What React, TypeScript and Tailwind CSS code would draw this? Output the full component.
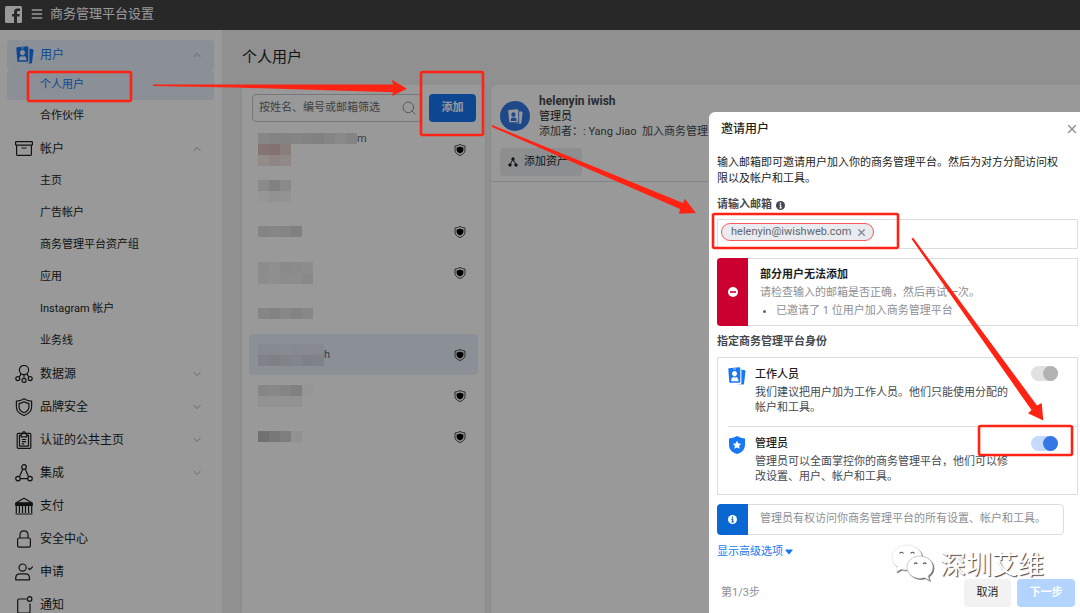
import React from 'react';
import { ChevronDown, ChevronUp, Menu, Search, X } from 'lucide-react';
import clsx from 'clsx';

const icons: Record<string, React.ReactNode> = {
  account: (
    <>
      <rect x="0.6" y="1.6" width="16.8" height="3.6" rx="0.6" />
      <path d="M1.6 5.2v9.4q0 .8.8.8h13.2q.8 0 .8-.8V5.2M6.5 8h5" />
    </>
  ),
  data: (
    <>
      <circle cx="9" cy="5" r="4.6" />
      <path d="M5.6 8.4v1.8L4 11.8M12.4 8.4v1.8l1.6 1.6M9 9.6v3.2" />
      <circle cx="2.8" cy="13.6" r="2" />
      <circle cx="15.2" cy="13.6" r="2" />
      <circle cx="9" cy="15.4" r="2" />
    </>
  ),
  brand: (
    <>
      <path d="M9 .7q3.4 2.2 7.6 2.4V9q0 6-7.6 8.5Q1.4 15 1.4 9V3.1Q5.6 2.900 9 .7z" />
      <path d="M9 3.7q2.3 1.5 4.9 1.7V9q0 3.9-4.9 5.7Q4.1 12.9 4.1 9V5.4Q6.7 5.2 9 3.7z" />
    </>
  ),
  page: (
    <>
      <rect x="2.2" y="2.4" width="13.6" height="15" rx="1" />
      <path d="M6.2 4.4H4.5v10.7h9V4.4h-1.7M6.2 5.8V2.8h1.3Q7.6.7 9 .7t1.5 2.1h1.3v3zM6.8 8.5h4.4M6.8 10.7h4.4M6.8 12.9h2.4" />
    </>
  ),
  integration: (
    <>
      <circle cx="9" cy="3" r="2.3" />
      <circle cx="3" cy="14.6" r="2.3" />
      <circle cx="15" cy="14.6" r="2.3" />
      <path d="M7.8 5L4.4 12.7M10.2 5l3.4 7.7M5.3 14.6h7.4" />
    </>
  ),
  payment: (
    <>
      <path d="M.7 8.4V6L9 1.2 17.3 6v2.4z" />
      <path d="M1.6 5.8h14.8v2.4H1.6z" fill="currentColor" />
      <path d="M1.3 8.4v7.5M4.4 8.4v7.5M7.5 8.4v7.5M10.5 8.4v7.5M13.6 8.4v7.5M16.7 8.4v7.5M.5 17h17" />
    </>
  ),
  security: (
    <>
      <rect x="2.6" y="8" width="12.8" height="9.2" rx="1.6" />
      <path d="M5 8V5q0-4.2 4-4.2T13 5v3" />
    </>
  ),
  request: (
    <>
      <circle cx="7.6" cy="4.6" r="3.6" />
      <path d="M.7 16.8v-1.600q0-4.400 4.200-4.400h5.400q4.200 0 4.200 4.400v1.600zM13.200 5l1.700 1.700L17.700 3.600" />
    </>
  ),
  notice: (
    <>
      <path d="M11.500 3H4.200Q2.700 3 2.700 4.500v11q0 1.500 1.500 1.500h9.300q1.500 0 1.500-1.500V7.500" />
      <circle cx="14.600" cy="3" r="2.300" />
    </>
  ),
};

function LineIcon({ name }: { name: string }) {
  return (
    <svg className="size-[18px] shrink-0" viewBox="0 0 18 18" fill="none" stroke="currentColor" strokeWidth="1.2" strokeLinejoin="round">
      {icons[name]}
    </svg>
  );
}

function BadgeIcon({ className }: { className?: string }) {
  return (
    <svg className={clsx('shrink-0', className)} viewBox="0 0 18 18" fill="currentColor">
      <path d="M13.400 2.600l3.400.6q.8.200.7 1l-1.500 12.600q-.1.900-1 .8L8.600 16.900h4.100q.7 0 .7-.8z" />
      <path
        fillRule="evenodd"
        d="M1 1.200L11.300.3q1 0 1 1v13.500q0 .9-.9 1H2.300q-.9 0-1-.9L.3 2.200q0-.9.700-1zM6.500 4a2.500 2.700 0 1 0 .01 0zM3.100 14.300h7.400q0-3.500-2.300-4.400-1.700 1.200-3 0-2.200.9-2.100 4.400z"
      />
      <path d="M5.300 1.600h2.500v.8H5.300z" fill="white" />
    </svg>
  );
}

function ShieldIcon() {
  return (
    <svg className="size-3 shrink-0" viewBox="0 0 12 12" role="img" aria-label="管理员">
      <path d="M6 .5q2.400 1.300 5 1.500V6q0 3.800-5 5.500Q1 9.800 1 6V2Q3.600 1.800 6 .5z" fill="none" stroke="#333" strokeWidth=".9" />
      <path d="M6 2.600q1.600.8 3.400 1V6q0 2.400-3.400 3.500Q2.600 8.400 2.600 6V3.600q1.800-.2 3.400-1z" fill="#000" />
    </svg>
  );
}

const accountLinks = ['主页', '广告帐户', '商务管理平台资产组', '应用', 'Instagram 帐户', '业务线'];

const sections = [
  { icon: 'data', label: '数据源', expandable: true },
  { icon: 'brand', label: '品牌安全', expandable: true },
  { icon: 'page', label: '认证的公共主页', expandable: true },
  { icon: 'integration', label: '集成', expandable: true },
  { icon: 'payment', label: '支付', expandable: false },
  { icon: 'security', label: '安全中心', expandable: false },
  { icon: 'request', label: '申请', expandable: false },
  { icon: 'notice', label: '通知', expandable: false },
];

function Sidebar() {
  return (
    <nav className="w-[222px] shrink-0 bg-white pt-[10px] pr-2 pl-[7px] text-[#1c1e21]">
      <button className="flex h-[30px] w-full items-center gap-[6px] rounded bg-[#e8effb] pr-[11px] pl-[9px] text-xs text-[#1877f2]">
        <BadgeIcon className="size-[18px]" />
        用户
        <ChevronUp className="ml-auto size-3 text-[#a8adb5]" />
      </button>
      <a href="#people" className="flex h-[30px] items-center rounded bg-[#e8effb] pl-[33px] text-[11px] text-[#1877f2]">
        个人用户
      </a>
      <a href="#partners" className="flex h-[33px] items-center pl-[33px] text-[11px]">
        合作伙伴
      </a>
      <button className="flex h-8 w-full items-center gap-[6px] pr-[11px] pl-2 text-xs">
        <LineIcon name="account" />
        <span className="pl-px">帐户</span>
        <ChevronUp className="ml-auto size-3 text-[#a8adb5]" />
      </button>
      {accountLinks.map((label) => (
        <a key={label} href="#accounts" className="flex h-8 items-center pl-[33px] text-[11px]">
          {label}
        </a>
      ))}
      {sections.map((section) => (
        <button key={section.icon} className="flex h-[33px] w-full items-center gap-[6px] pr-[11px] pl-2 text-xs">
          <LineIcon name={section.icon} />
          <span className="pl-px">{section.label}</span>
          {section.expandable && <ChevronDown className="ml-auto size-3 text-[#a8adb5]" />}
        </button>
      ))}
    </nav>
  );
}

interface Person {
  id: number;
  // masked name, one array of block colours per line
  mask: string[][];
  tail?: string;
  admin?: boolean;
  selected?: boolean;
}

const people: Person[] = [
  {
    id: 1,
    mask: [
      ['bg-[#e2e2e2]', 'bg-[#dcdcdc]', 'bg-[#dadada]', 'bg-[#dedede]', 'bg-[#dadada]', 'bg-[#d8d8d8]', 'bg-[#dedede]', 'bg-[#e4e4e4]', 'bg-[#dcdcdc]'],
      ['bg-[#ddc2c1]', 'bg-[#dabfbe]', 'bg-[#e6d2d1]'],
      ['bg-[#f2e8e7]', 'bg-[#eddedd]', 'bg-[#f0e4e3]'],
    ],
    tail: 'm',
    admin: true,
  },
  { id: 2, mask: [['bg-[#e6e6e6]', 'bg-[#d8d8d8]', 'bg-[#e6e6e6]'], ['bg-[#fafafa]', 'bg-[#f3f3f3]', 'bg-[#f6f6f6]']] },
  { id: 3, mask: [['bg-[#dcdcdc]', 'bg-[#e0e0e0]', 'bg-[#dedede]', 'bg-[#d6d6d6]']], admin: true },
  {
    id: 4,
    mask: [
      ['bg-[#e9e9e9]', 'bg-[#eeeeee]', 'bg-[#e6e6e6]', 'bg-[#e8e8e8]', 'bg-[#ebebeb]'],
      ['bg-[#ececec]', 'bg-[#efefef]', 'bg-[#ebebeb]', 'bg-[#ebebeb]', 'bg-[#e4e4e4]'],
    ],
    admin: true,
  },
  { id: 5, mask: [['bg-[#e0e0e0]', 'bg-[#dadada]', 'bg-[#e2e2e2]', 'bg-[#dadada]', 'bg-[#e2e2e2]']] },
  {
    id: 6,
    mask: [
      ['bg-[#dfe5f2]', 'bg-[#e0e5f0]', 'bg-[#e2e8f4]', 'bg-[#dfe4ef]', 'bg-[#e2e7f2]', 'bg-[#dfe5ef]'],
      ['bg-[#d5d9e5]', 'bg-[#d2d5e0]', 'bg-[#d7dbe6]', 'bg-[#d9dfea]', 'bg-[#d0d6e2]', 'bg-[#d4d9e4]'],
    ],
    tail: 'h',
    admin: true,
    selected: true,
  },
  {
    id: 7,
    mask: [
      ['bg-[#e0e0e0]', 'bg-[#e3e3e3]', 'bg-[#dedede]', 'bg-[#d6d6d6]', 'bg-[#fafafa]'],
      ['bg-[#f3f3f3]', 'bg-[#f6f6f6]', 'bg-[#f3f3f3]', 'bg-[#f3f3f3]'],
    ],
    admin: true,
  },
  { id: 8, mask: [['bg-[#bcbcbc]', 'bg-[#c8c8c8]', 'bg-[#d3d3d3]', 'bg-[#f4f4f4]']], admin: true },
];

function PeopleList() {
  return (
    <section className="w-[243px] shrink-0 rounded-t-md bg-white px-[7px] pt-[9px] shadow">
      <div className="flex gap-[7px] pr-[2px] pl-[3px]">
        <label className="flex h-7 min-w-0 flex-1 items-center rounded border border-[#c4c8ce] pr-1 pl-[6px]">
          <input
            type="text"
            aria-label="筛选用户"
            placeholder="按姓名、编号或邮箱筛选"
            className="min-w-0 flex-1 text-[11px] placeholder:text-[#6a6d73] focus:outline-none"
          />
          <Search className="size-4" color="#8d949e" strokeWidth={1.5} />
        </label>
        <button className="h-7 w-[47px] rounded bg-[#1877f2] text-[11px] font-bold text-white">添加</button>
      </div>
      <ul className="pt-[7px]">
        {people.map((person) => (
          <li
            key={person.id}
            className={clsx('flex h-[41px] items-center justify-between rounded pr-3 pl-[9px]', person.selected && 'bg-[#e8effb]')}
          >
            <div className="flex items-center">
              <div>
                {person.mask.map((line, i) => (
                  <div key={i} className="flex">
                    {line.map((color, j) => (
                      <span key={j} className={clsx('size-[11px]', color)} />
                    ))}
                  </div>
                ))}
              </div>
              {person.tail && (
                <span className={clsx('text-[11px] leading-3 text-[#606770]', person.id === 1 && 'self-start')}>{person.tail}</span>
              )}
            </div>
            {person.admin && <ShieldIcon />}
          </li>
        ))}
      </ul>
    </section>
  );
}

function PersonDetail() {
  return (
    <section className="min-w-0 flex-1 rounded-tl-md bg-white shadow">
      <div className="h-[97px] border-b border-[#dadde1] px-[9px] pt-2">
        <div className="flex gap-[9px]">
          <div className="mt-2 flex size-[30px] shrink-0 items-center justify-center rounded-full bg-[#3578e5] text-white">
            <BadgeIcon className="size-[15px]" />
          </div>
          <div className="pt-px text-[11px] leading-[15px] whitespace-nowrap text-[#1c1e21]">
            <h2 className="text-xs leading-[15px] font-bold text-[#444950]">helenyin iwish</h2>
            <p>管理员</p>
            <p className="leading-4 text-[#444950]">添加者：: Yang Jiao&nbsp; 加入商务管理</p>
          </div>
        </div>
        <button className="mt-2 flex h-7 w-[82px] items-center gap-[6px] rounded bg-[#ebedf0] px-2 text-[11px] text-[#1c1e21]">
          <svg className="size-[10px]" viewBox="0 0 10 10" fill="currentColor" stroke="currentColor">
            <path d="M5 2L2 8M5 2l3 6" fill="none" strokeWidth="1" />
            <circle cx="5" cy="2" r="1.200" />
            <circle cx="2" cy="8" r="1.200" />
            <circle cx="8" cy="8" r="1.200" />
          </svg>
          添加资产
        </button>
      </div>
    </section>
  );
}

function InfoIcon({ className }: { className?: string }) {
  return (
    <svg className={clsx('size-[9px]', className)} viewBox="0 0 10 10">
      <circle cx="5" cy="5" r="5" fill="currentColor" />
      <path d="M5 1.700v1.500M3.900 4.500h1.300v3M3.900 7.700h2.500" stroke={className?.includes('text-white') ? '#0a66d0' : 'white'} strokeWidth="1.300" />
    </svg>
  );
}

function InviteDialog() {
  return (
    <div role="dialog" aria-labelledby="invite-title" className="flex h-full w-[371px] flex-col rounded-tl-md bg-white pr-[2px] pl-2 text-[11px] text-[#1c1e21]">
      <div className="flex h-[33px] items-center justify-between pl-1">
        <h2 id="invite-title" className="text-xs font-medium">
          邀请用户
        </h2>
        <button aria-label="关闭" className="-mr-px">
          <X className="size-[14px] text-[#8d949e]" strokeWidth={2.5} />
        </button>
      </div>
      <p className="mt-[10px] pr-4 leading-4">输入邮箱即可邀请用户加入你的商务管理平台。然后为对方分配访问权限以及帐户和工具。</p>
      <label htmlFor="invite-email" className="mt-[10px] flex h-4 items-center gap-1 font-bold text-[#444950]">
        请输入邮箱
        <InfoIcon className="text-[#444950]" />
      </label>
      <div className="mt-[6px] flex h-[30px] items-center border border-[#dadde1] px-[3px] pb-1">
        <span className="flex h-[18px] items-center gap-1 rounded-full border border-[#fa5a5f] bg-[#e9ebee] pr-[6px] pl-[9px] text-[11px] text-[#606770]">
          helenyin@iwishweb.com
          <button aria-label="移除 helenyin@iwishweb.com">
            <X className="size-[11px] text-[#7f8894]" strokeWidth={3} />
          </button>
        </span>
        <input id="invite-email" type="text" className="min-w-0 flex-1 focus:outline-none" />
      </div>
      <div className="mt-[9px] flex h-[68px] border border-[#dadde1]">
        <div className="-my-px -ml-px flex w-[31px] items-center justify-center rounded-l-sm bg-[#cc0030]">
          <svg className="size-[10px]" viewBox="0 0 10 10">
            <circle cx="5" cy="5" r="5" fill="white" />
            <path d="M2 5h6" stroke="#cc0030" strokeWidth="1.600" />
          </svg>
        </div>
        <div className="pt-[7px] pl-3 text-[#8d8f94]">
          <h3 className="leading-[18px] font-bold text-[#1c1e21]">部分用户无法添加</h3>
          <p className="leading-[18px]">请检查输入的邮箱是否正确，然后再试一次。</p>
          <ul className="list-disc pl-4 leading-[18px] marker:text-[#606770]">
            <li>已邀请了 1 位用户加入商务管理平台</li>
          </ul>
        </div>
      </div>
      <h3 className="mt-2 leading-4 font-bold text-[#444950]">指定商务管理平台身份</h3>
      <div className="mt-[7px] border border-[#dadde1] pl-[10px]">
        <div className="flex h-[69px] border-b border-[#dadde1] pt-2">
          <BadgeIcon className="mt-px size-[18px] text-[#1877f2]" />
          <div className="w-[264px] pl-[9px]">
            <label htmlFor="role-employee" className="block leading-[18px] font-medium">
              工作人员
            </label>
            <p className="pt-px leading-[15px] text-[#444950]">我们建议把用户加为工作人员。他们只能使用分配的帐户和工具。</p>
          </div>
          <input
            id="role-employee"
            type="checkbox"
            className="mr-[19px] ml-auto flex h-[15px] w-[27px] appearance-none justify-end rounded-full bg-[#e1e1e1] before:size-[15px] before:rounded-full before:bg-[#b2b2b2]"
          />
        </div>
        <div className="flex h-[67px] pt-[7px]">
          <svg className="mt-[2px] size-[18px] shrink-0" viewBox="0 0 18 18">
            <path d="M9 0q3.600 2.300 8 2.600V9q0 6.500-8 9-8-2.500-8-9V2.600Q5.400 2.300 9 0z" fill="#1877f2" />
            <path d="M9 4.700l1.300 2.700 3 .4-2.200 2 .6 3L9 11.400l-2.700 1.400.6-3-2.200-2 3-.4z" fill="white" />
          </svg>
          <div className="w-[264px] pl-[9px]">
            <label htmlFor="role-admin" className="block leading-5 font-medium">
              管理员
            </label>
            <p className="leading-[15px] text-[#444950]">管理员可以全面掌控你的商务管理平台，他们可以修改设置、用户、帐户和工具。</p>
          </div>
          <input
            id="role-admin"
            type="checkbox"
            defaultChecked
            className="mt-[2px] mr-[19px] ml-auto flex h-[15px] w-[27px] appearance-none justify-end rounded-full bg-[#c4d9fb] before:size-[15px] before:rounded-full before:bg-[#3578e5]"
          />
        </div>
      </div>
      <div className="mt-[9px] mr-[14px] flex h-[31px] items-center rounded-sm border border-[#dadde1]">
        <div className="-ml-px flex h-[31px] w-[31px] items-center justify-center rounded-l-sm bg-[#0a66d0]">
          <InfoIcon className="text-white" />
        </div>
        <p className="pl-3 text-[#8d8f94]">管理员有权访问你商务管理平台的所有设置、帐户和工具。</p>
      </div>
      <a href="#advanced" className="mt-[9px] flex h-4 items-center gap-[2px] self-start text-[#1877f2]">
        显示高级选项
        <svg className="h-[6px] w-2" viewBox="0 0 8 6" fill="currentColor">
          <path d="M.8.5h6.400q.8.400.2 1.100L4.600 5q-.6.600-1.200 0L.6 1.600Q0 .9.800.5z" />
        </svg>
      </a>
      <div className="mt-[19px] flex h-7 items-center gap-[6px] pr-[3px] pl-1 text-[#8d8f94]">
        <span className="mr-auto">第1/3步</span>
        <button className="h-7 w-[47px] rounded bg-[#f2f2f2] text-[#1c1e21]">取消</button>
        <button className="h-7 w-[58px] rounded bg-[#b2d4ff] font-bold text-white">下一步</button>
      </div>
    </div>
  );
}

function Annotations() {
  return (
    <svg className="pointer-events-none absolute top-0 left-0" width="1080" height="613" viewBox="0 0 1080 613" aria-hidden="true">
      <g fill="none" stroke="#ff2314" strokeWidth="2.600">
        <rect x="28" y="72" width="103" height="29" rx="1.500" />
        <rect x="421" y="72" width="62" height="63" rx="1.500" />
        <rect x="713" y="214" width="185" height="34" rx="1.500" />
        <rect x="979" y="426" width="93" height="29" rx="1.500" />
      </g>
      <g fill="#ff2314">
        <path d="M153 84.500L393 84.500 392 79.700 407 88.700 392 96 393 92.300 235 87.500 153 86z" />
        <path d="M492 125L683 203 685 199 696 213 679 213.700 680 209 492 127z" />
        <path d="M913 237.500L1037 405.500 1041.700 403 1043.300 420.500 1028 413.300 1031.500 410 911.500 239z" />
      </g>
    </svg>
  );
}

function Watermark() {
  return (
    <div className="pointer-events-none absolute right-[36px] bottom-[30px] flex items-center gap-[6px]" aria-hidden="true">
      <svg className="h-[38px] w-[43px] drop-shadow-[1px_1px_0_#666]" viewBox="0 0 43 38">
        <path d="M16 1C7.500 1 1 6.500 1 13.500c0 4 2.200 7.300 5.600 9.600L5.200 28l5-2.700q2.800.8 5.800.8c8.300 0 15-5.600 15-12.600S24.300 1 16 1z" fill="white" stroke="#ddd" strokeWidth=".5" />
        <path d="M29 12c-7.300 0-13 5-13 11.200s5.700 11.200 13 11.200q2.300 0 4.500-.7l5 2.700-1.300-4.400c3-2 4.800-5.200 4.800-8.800C42 17 36.300 12 29 12z" fill="white" stroke="#aaa" strokeWidth=".6" />
        <g fill="none" stroke="#555" strokeWidth="1.100">
          <path d="M8.500 9.500q2-2.500 4 0M19.500 9.500q2-2.500 4 0M23 20q1.700-2.200 3.400 0M32 20q1.700-2.200 3.400 0" />
        </g>
      </svg>
      <span className="pt-1 text-[26px] leading-9 text-white [text-shadow:1px_1px_1px_#444]">深圳艾维</span>
    </div>
  );
}

function App() {
  return (
    <div className="relative flex h-screen flex-col overflow-hidden bg-[#f0f1f2] font-['Roboto','Noto_Sans_CJK_SC',sans-serif]">
      <header className="flex h-[30px] shrink-0 items-center bg-[#444] pb-[2px] pl-[5px] text-white">
        <svg className="size-[17px]" viewBox="0 0 17 17">
          <rect width="17" height="17" rx="1.500" fill="white" />
          <path d="M9 17v-6.500H7V8h2V6q0-3.500 3.500-3.500H15V5h-1.500Q12 5 12 6.300V8h2.800l-.4 2.500H12V17z" fill="#444" />
        </svg>
        <button aria-label="菜单" className="ml-2">
          <Menu className="size-[14px]" strokeWidth={2.5} />
        </button>
        <h1 className="ml-[6px] text-[13px]">商务管理平台设置</h1>
      </header>
      <div className="flex min-h-0 flex-1">
        <Sidebar />
        <main className="flex min-w-0 flex-1 flex-col pl-5">
          <h2 className="flex h-[55px] shrink-0 items-center text-[15px] text-[#1c1e21]">个人用户</h2>
          <div className="flex min-h-0 flex-1 gap-[6px]">
            <PeopleList />
            <PersonDetail />
          </div>
        </main>
      </div>
      <div className="absolute inset-0 flex justify-end bg-black/40 pt-[112px]">
        <InviteDialog />
      </div>
      <Watermark />
      <Annotations />
    </div>
  );
}

export default App;
